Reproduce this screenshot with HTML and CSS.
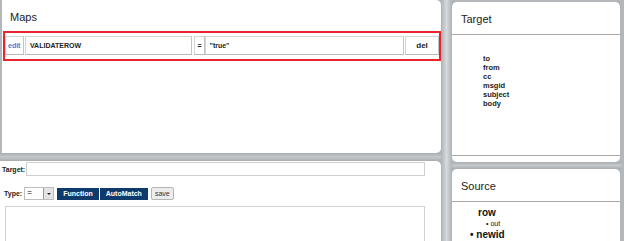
FILE: index.html
```html
<html lang="en">
  <head>
    <meta charset="utf-8">
    <link rel="stylesheet" href="styles.css">
  </head>
  <body>
  <div class="layout">
    <div class="col col__left">
      <div class="panel panel__maps">
        <div class="panel_title">Maps</div>
        <div class="maprow">
          <div class="cell cell__edit">edit</div>
          <div class="cell cell__name">VALIDATEROW</div>
          <div class="cell cell__op">=</div>
          <div class="cell cell__value">"true"</div>
          <div class="cell cell__del">del</div>
        </div>
      </div>
      <div class="hsplit"></div>
      <div class="panel panel__editor">
        <div class="targetrow">
          <span class="label">Target:</span>
          <div class="input"></div>
        </div>
        <div class="typerow">
          <span class="label">Type:</span>
          <div class="select"><span>=</span><span class="select_btn"><span class="arrow"></span></span></div>
          <span class="btn">Function</span>
          <span class="btn">AutoMatch</span>
          <span class="btn btn__save">save</span>
        </div>
        <div class="textarea"></div>
      </div>
    </div>
    <div class="vsplit"></div>
    <div class="col col__right">
      <div class="panel panel__target">
        <div class="panel_head">Target</div>
        <ul class="fields">
          <li>to</li>
          <li>from</li>
          <li>cc</li>
          <li>msgid</li>
          <li>subject</li>
          <li>body</li>
        </ul>
        <div class="panel_foot"></div>
      </div>
      <div class="hsplit hsplit__right"></div>
      <div class="panel panel__source">
        <div class="panel_head">Source</div>
        <div class="tree">
          <div class="tree_root">row</div>
          <div class="tree_child">&bull; out</div>
          <div class="tree_item">&bull; newid</div>
        </div>
      </div>
    </div>
  </div>
  </body>
</html>
```

FILE: styles.css
```css
html, body {
  margin: 0; padding: 0;
  width: 624px; height: 241px;
  overflow: hidden;
  font-family: "Liberation Sans", Arial, sans-serif;
  background: #b3b7b9;
}

.layout {
  display: grid;
  grid-template-columns: 441px 11px 170px;
  height: 241px;
}

.col {
  display: flex;
  flex-direction: column;
  height: 241px;
}

.panel {
  background: #fff;
}

/* splitters */
.hsplit {
  height: 8px;
  flex: none;
  background: linear-gradient(#a9adaf, #c4c8ca 50%, #a9adaf);
}
.hsplit__right {
  height: 7px;
}
.vsplit {
  background: linear-gradient(90deg, #aeb2b4, #d6dadc 50%, #aeb2b4);
}

/* maps */
.panel__maps {
  height: 153px;
  margin-left: 2px;
  border-radius: 0 5px 5px 0;
  flex: none;
}
.panel_title {
  font-size: 11px;
  color: #222;
  padding: 11px 0 0 8px;
  height: 20px;
}
.maprow {
  display: flex;
  gap: 1px;
  border: 2px solid #e8242c;
  margin-left: 1px;
  padding: 3px 0 4px 0;
  height: 19px;
}
.cell {
  border: 1px solid #d4d4d4;
  border-bottom-color: #b8b8b8;
  border-right-color: #c4c4c4;
  font-size: 7px;
  font-weight: bold;
  color: #222;
  line-height: 17px;
  padding-left: 4px;
  box-sizing: border-box;
}
.cell__edit { width: 19px; color: #2f86e0; padding-left: 2px; }
.cell__name { width: 167px; }
.cell__op { width: 11px; margin-left: 1px; padding-left: 3px; }
.cell__value { width: 200px; margin-left: -1px; }
.cell__del { width: 34px; padding-left: 0; text-align: center; font-size: 8px; }

/* editor */
.panel__editor {
  flex: 1;
  border-radius: 0 5px 0 0;
}
.label {
  font-size: 7px;
  font-weight: bold;
  color: #222;
}
.targetrow {
  display: flex;
  align-items: center;
  gap: 1px;
  padding: 1px 0 0 2px;
}
.input {
  width: 397px;
  height: 12px;
  border: 1px solid #cfcfcf;
}
.typerow {
  display: flex;
  align-items: center;
  padding: 11px 0 0 4px;
  height: 13px;
}
.typerow .label { margin-right: 2px; }
.select {
  display: flex;
  justify-content: space-between;
  width: 26px;
  height: 11px;
  border: 1px solid #bdbdbd;
  font-size: 8px;
  line-height: 10px;
  padding-left: 2px;
  margin-right: 3px;
}
.select_btn {
  width: 9px;
  background: #e4e4e4;
  border-left: 1px solid #9a9a9a;
  display: flex;
  align-items: center;
  justify-content: center;
}
.arrow {
  border-left: 2px solid transparent;
  border-right: 2px solid transparent;
  border-top: 2px solid #222;
}
.btn {
  background: #0e3b6b;
  color: #fff;
  font-size: 7px;
  font-weight: bold;
  height: 12px;
  line-height: 12px;
  padding: 0 6px;
  margin-right: 1px;
}
.btn__save {
  background: #ececec;
  color: #333;
  font-weight: normal;
  border: 1px solid #b5b5b5;
  border-radius: 2px;
  padding: 0 3px;
  margin-left: 2px;
  height: 11px;
  line-height: 11px;
}
.textarea {
  margin: 6px 0 0 5px;
  width: 418px;
  height: 40px;
  border: 1px solid #d2d2d2;
}

/* right side */
.panel__target {
  margin-top: 2px;
  height: 160px;
  flex: none;
  border-radius: 5px;
  display: flex;
  flex-direction: column;
  margin-right: 2px;
}
.panel_head {
  font-size: 11px;
  color: #222;
  padding: 11px 0 0 9px;
  height: 21px;
  border-bottom: 1px solid #a9a9a9;
}
.fields {
  list-style: none;
  margin: 0;
  padding: 19px 0 0 31px;
  flex: 1;
}
.fields li {
  font-size: 7.5px;
  font-weight: bold;
  color: #222;
  line-height: 9px;
}
.panel_foot {
  height: 6px;
  border-top: 1px solid #a9a9a9;
}
.panel__source {
  flex: 1;
  border-radius: 5px 5px 0 0;
  margin-right: 2px;
}
.tree {
  padding: 5px 0 0 18px;
  font-weight: bold;
  color: #111;
}
.tree_root {
  font-size: 10px;
  line-height: 12px;
  padding-left: 8px;
}
.tree_child {
  font-size: 7px;
  font-weight: normal;
  line-height: 10px;
  padding-left: 16px;
}
.tree_item {
  font-size: 10px;
  line-height: 12px;
}
```
